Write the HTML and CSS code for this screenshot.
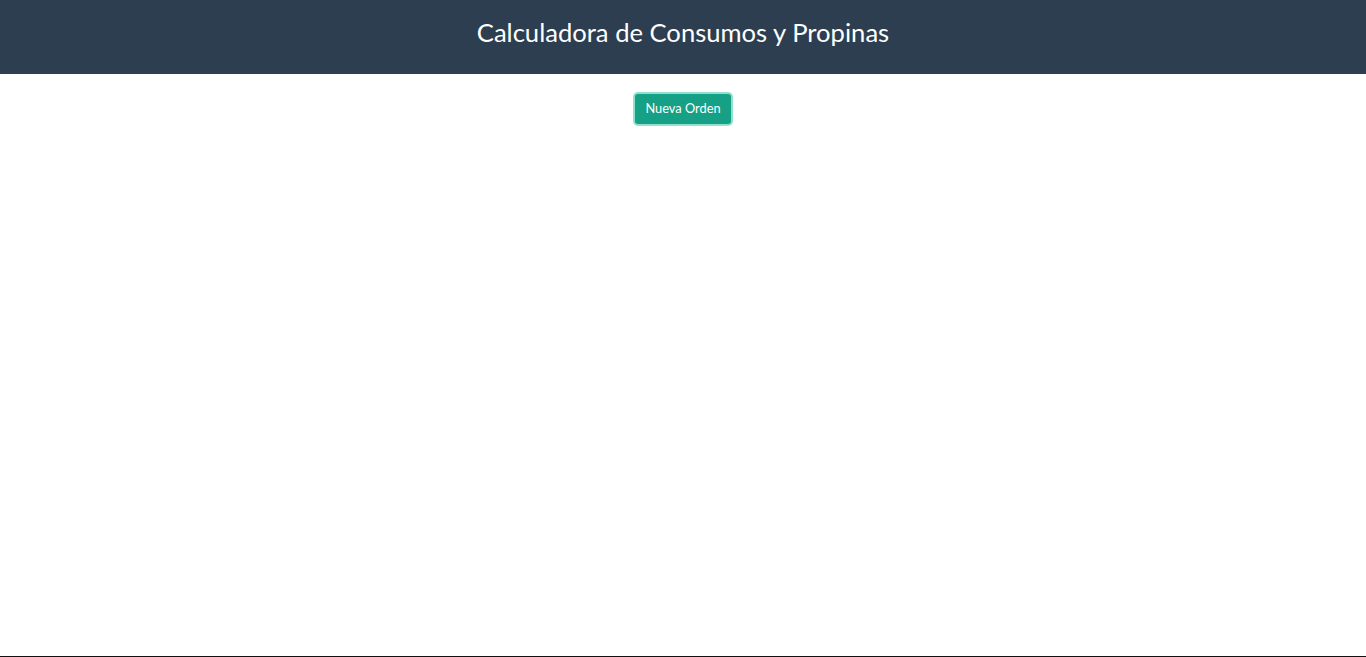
FILE: index.html
```html
<!DOCTYPE html>
<html lang="es">
<head>
<meta charset="utf-8">
<title>Calculadora de Consumos y Propinas</title>
<link rel="stylesheet" href="styles.css">
</head>
<body>
<div class="page">
  <header class="topbar">
    <h1 class="title">Calculadora de Consumos y Propinas</h1>
  </header>
  <main class="content">
    <button class="btn-new" type="button">Nueva Orden</button>
  </main>
</div>
</body>
</html>
```
FILE: styles.css
```css
* { box-sizing: border-box; }
html, body { margin: 0; padding: 0; height: 100%; }
body {
  font-family: Lato, "Noto Sans", sans-serif;
  background: #ffffff;
}
.page {
  min-height: 100vh;
  display: flex;
  flex-direction: column;
  border-bottom: 1px solid #111111;
}
.topbar {
  height: 74px;
  background: #2c3e50;
  display: flex;
  align-items: center;
  justify-content: center;
}
.title {
  margin: 0;
  color: #ffffff;
  font-weight: 400;
  font-size: 25.6px;
  line-height: 1;
  padding-bottom: 8px;
}
.content {
  flex: 1;
  display: flex;
  justify-content: center;
  align-items: flex-start;
  padding-top: 20px;
}
.btn-new {
  font-family: Lato, "Noto Sans", sans-serif;
  font-size: 12.8px;
  color: #ffffff;
  background: #16a085;
  border: none;
  border-radius: 3px;
  height: 30px;
  width: 96px;
  padding: 0 0 2px 0;
  box-shadow: 0 0 0 2px #8fe0cd;
  cursor: pointer;
}
```
